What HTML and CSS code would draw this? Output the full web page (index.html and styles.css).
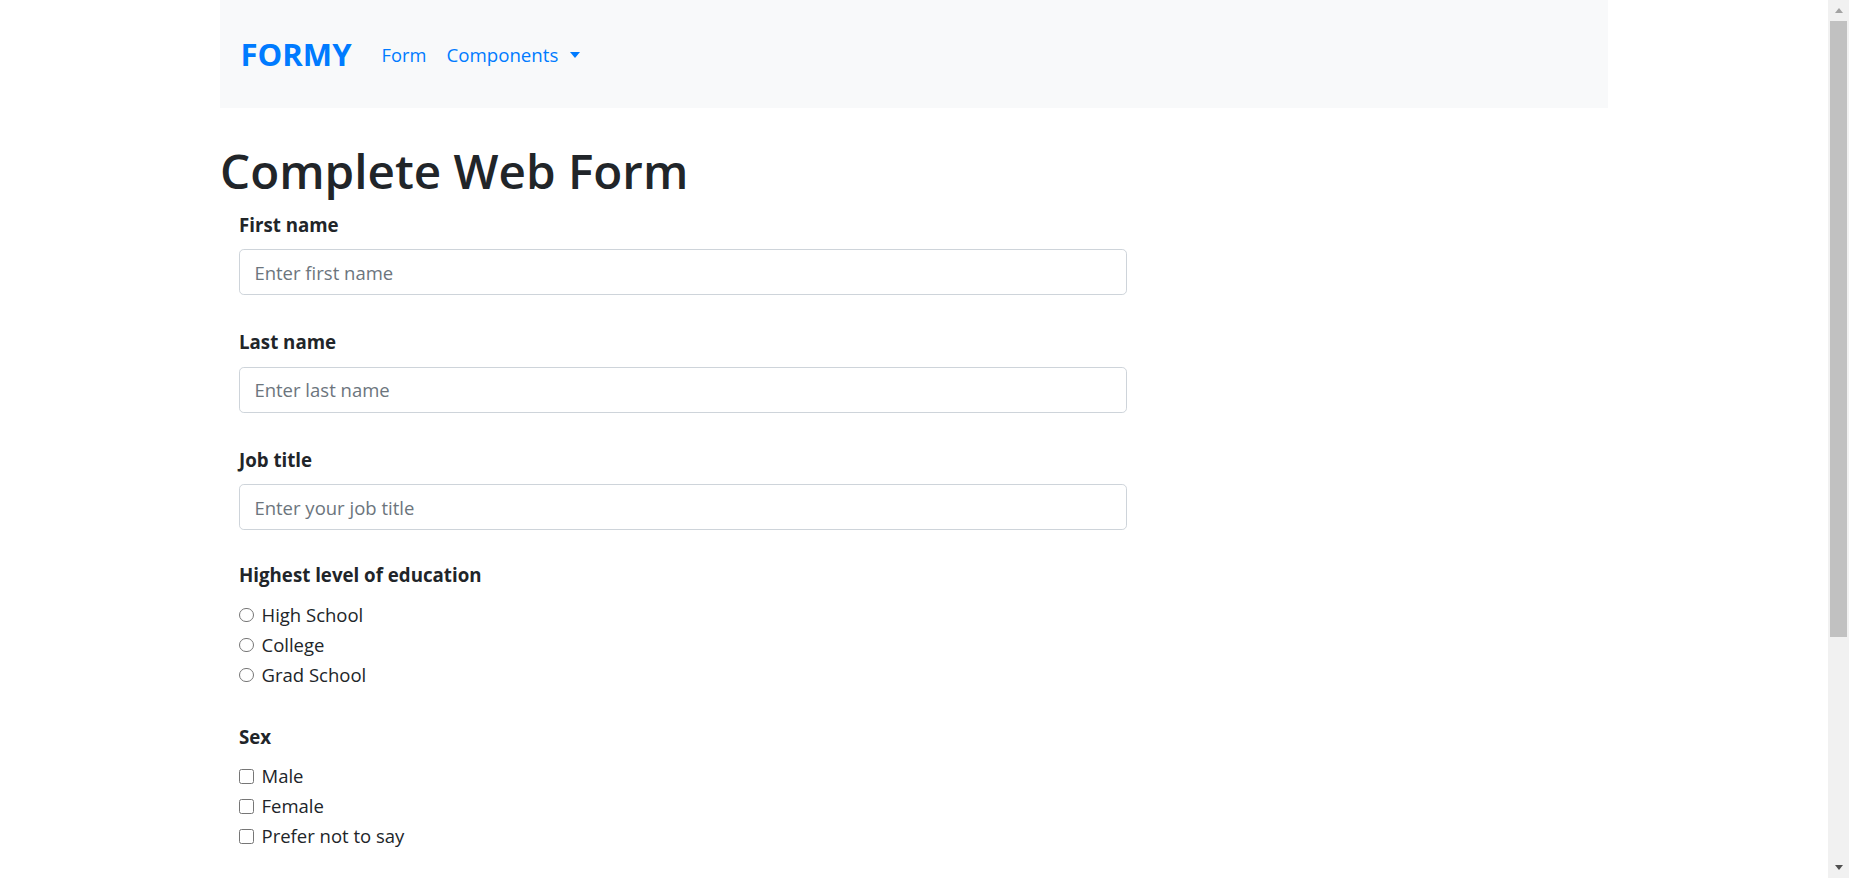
FILE: index.html
```html
<!DOCTYPE html>
<html lang="en">
<head>
<meta charset="utf-8">
<title>Formy - Complete Web Form</title>
<link rel="stylesheet" href="styles.css">
</head>
<body>
<div class="screen">
  <div class="page">
    <div class="container">
      <nav class="navbar">
        <a class="brand" href="#">FORMY</a>
        <ul class="nav">
          <li><a class="nav-link" href="#">Form</a></li>
          <li><a class="nav-link dropdown-toggle" href="#">Components</a></li>
        </ul>
      </nav>
      <h1 class="title">Complete Web Form</h1>
      <form class="form">
        <div class="group">
          <label class="label" for="first-name">First name</label>
          <input class="input" type="text" id="first-name" placeholder="Enter first name">
        </div>
        <div class="group">
          <label class="label" for="last-name">Last name</label>
          <input class="input" type="text" id="last-name" placeholder="Enter last name">
        </div>
        <div class="group group-tight">
          <label class="label" for="job-title">Job title</label>
          <input class="input" type="text" id="job-title" placeholder="Enter your job title">
        </div>
        <div class="group">
          <div class="label">Highest level of education</div>
          <div class="choice"><input class="radio" type="radio" name="edu" id="edu-1"><label for="edu-1">High School</label></div>
          <div class="choice"><input class="radio" type="radio" name="edu" id="edu-2"><label for="edu-2">College</label></div>
          <div class="choice"><input class="radio" type="radio" name="edu" id="edu-3"><label for="edu-3">Grad School</label></div>
        </div>
        <div class="group">
          <div class="label">Sex</div>
          <div class="choice"><input class="checkbox" type="checkbox" id="sex-1"><label for="sex-1">Male</label></div>
          <div class="choice"><input class="checkbox" type="checkbox" id="sex-2"><label for="sex-2">Female</label></div>
          <div class="choice"><input class="checkbox" type="checkbox" id="sex-3"><label for="sex-3">Prefer not to say</label></div>
        </div>
      </form>
    </div>
  </div>
  <div class="scrollbar">
    <div class="sb-btn"><span class="sb-arrow-up"></span></div>
    <div class="sb-track"><div class="sb-thumb"></div></div>
    <div class="sb-btn"><span class="sb-arrow-down"></span></div>
  </div>
</div>
</body>
</html>
```

FILE: styles.css
```css
* { box-sizing: border-box; }
html, body { margin: 0; padding: 0; }
body {
  font-family: "Open Sans", "Liberation Sans", sans-serif;
  font-size: 18.5px;
  color: #212529;
  background: #fff;
}
.screen { display: flex; height: 878px; overflow: hidden; }
.page { flex: 1; min-width: 0; }
.container { width: 1388px; margin: 0 auto; }

.navbar {
  display: flex;
  align-items: center;
  height: 108px;
  padding: 0 20.5px;
  background: #f8f9fa;
}
.brand {
  font-weight: 700;
  font-size: 31.1px;
  color: #007bff;
  text-decoration: none;
  margin-right: 20px;
}
.nav { display: flex; list-style: none; margin: 0; padding: 0; }
.nav-link {
  display: block;
  padding: 0 10px;
  color: #007bff;
  text-decoration: none;
  font-size: 18.3px;
}
.dropdown-toggle { font-size: 18.7px; }
.dropdown-toggle::after {
  content: "";
  display: inline-block;
  margin-left: 12px;
  vertical-align: 4px;
  border-top: 6px solid #007bff;
  border-left: 5.5px solid transparent;
  border-right: 5.5px solid transparent;
}

.title {
  margin: 34px 0 10.7px;
  font-size: 47.6px;
  font-weight: 600;
  line-height: 58.3px;
}
.form { padding-left: 19px; width: 926px; }
.group { display: flex; flex-direction: column; align-items: flex-start; margin-bottom: 33px; }
.group-tight { margin-bottom: 31px; }
.label {
  font-weight: 700;
  font-size: 18.7px;
  line-height: 28.8px;
  margin-bottom: 9.6px;
}
.input {
  width: 888px;
  height: 46px;
  padding: 0 14.4px;
  border: 1px solid #ced4da;
  border-radius: 4.8px;
  font: inherit;
  color: #495057;
  background: #fff;
}
.input::placeholder { color: #6c757d; }
.choice { display: flex; align-items: center; height: 30px; }
.choice label { margin-left: 8px; }
.radio, .checkbox {
  appearance: none;
  -webkit-appearance: none;
  margin: 1px 0 0;
  width: 14.5px;
  height: 14.5px;
  border: 1px solid #767676;
  background: #fff;
}
.radio { border-radius: 50%; }
.checkbox { border-radius: 2.5px; }

.scrollbar {
  width: 21px;
  height: 878px;
  background: #f1f1f1;
  display: flex;
  flex-direction: column;
}
.sb-btn { height: 21px; display: flex; align-items: center; justify-content: center; }
.sb-track { flex: 1; padding: 0 2px; }
.sb-thumb { height: 616px; background: #c1c1c1; }
.sb-arrow-up { border-bottom: 5px solid #a3a3a3; border-left: 4.5px solid transparent; border-right: 4.5px solid transparent; }
.sb-arrow-down { border-top: 5px solid #505050; border-left: 4.5px solid transparent; border-right: 4.5px solid transparent; }
```
